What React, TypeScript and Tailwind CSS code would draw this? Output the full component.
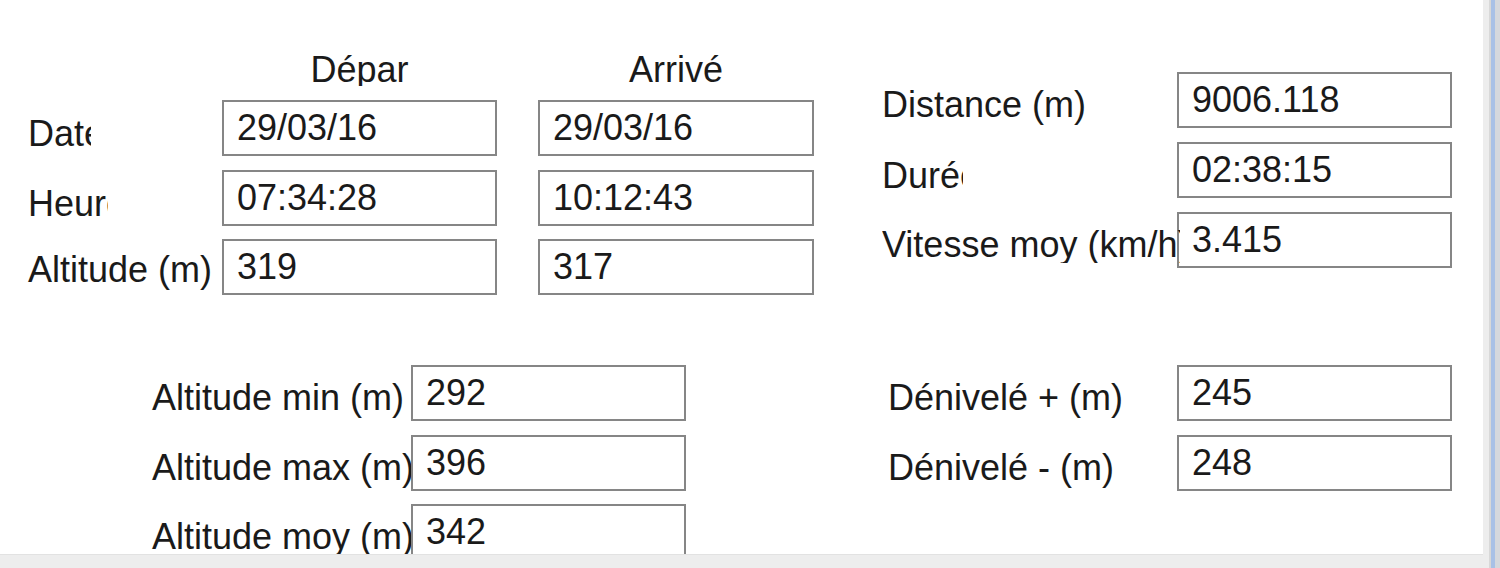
const font = "font-['Liberation_Sans',Arial,sans-serif]";

function Box({ value, w = 'w-[275px]' }: { value: string; w?: string }) {
  return (
    <div className={`${w} h-[56px] shrink-0 border-2 border-[#868686] bg-white pl-[13px] flex items-center text-[36px] leading-none text-[#1a1a1a]`}>
      {value}
    </div>
  );
}

function Label({ text, w, pt = 'pt-[10px]', clip = false }: { text: string; w: string; pt?: string; clip?: boolean }) {
  return (
    <div
      className={`${w} ${pt} shrink-0 whitespace-nowrap text-[36px] leading-[36px] text-[#1a1a1a] ${clip ? 'overflow-hidden' : ''}`}
    >
      {text}
    </div>
  );
}

export default function App() {
  return (
    <div className={`flex h-[568px] w-[1500px] bg-[#ececec] ${font}`}>
      <div className="flex w-[1483px] flex-col">
        <div className="h-[554px] overflow-hidden bg-white">
          {/* top section */}
          <div className="flex items-start">
            <div className="w-[882px] pl-[28px]">
              <div className="flex h-[86px] items-start pt-[52px]">
                <div className="w-[194px]" />
                <div className="h-[34px] w-[275px] overflow-hidden text-center text-[36px] leading-[36px] text-[#1a1a1a]">
                  Dépar
                </div>
                <div className="w-[41px]" />
                <div className="h-[34px] w-[276px] overflow-hidden text-center text-[36px] leading-[36px] text-[#1a1a1a]">
                  Arrivé
                </div>
              </div>
              <div className="mt-[14px] flex flex-col gap-[13.5px]">
                <div className="flex items-center">
                  <div className="w-[194px]">
                    <Label text="Date" w="w-[63px]" pt="pt-[12px]" clip />
                  </div>
                  <Box value="29/03/16" />
                  <div className="w-[41px]" />
                  <Box value="29/03/16" w="w-[276px]" />
                </div>
                <div className="flex items-center">
                  <div className="w-[194px]">
                    <Label text="Heure" w="w-[80px]" pt="pt-[12px]" clip />
                  </div>
                  <Box value="07:34:28" />
                  <div className="w-[41px]" />
                  <Box value="10:12:43" w="w-[276px]" />
                </div>
                <div className="flex items-center">
                  <Label text="Altitude (m)" w="w-[194px]" pt="pt-[6px]" />
                  <Box value="319" />
                  <div className="w-[41px]" />
                  <Box value="317" w="w-[276px]" />
                </div>
              </div>
            </div>

            <div className="flex flex-col gap-[14px] pt-[72px]">
              <div className="flex items-center">
                <Label text="Distance (m)" w="w-[295px]" />
                <Box value="9006.118" />
              </div>
              <div className="flex items-center">
                <div className="w-[295px]">
                  <Label text="Durée" w="w-[81px]" pt="pt-[12px]" clip />
                </div>
                <Box value="02:38:15" />
              </div>
              <div className="flex items-center">
                <div className="relative z-10 w-[295px]">
                  <Label text="Vitesse moy (km/h)" w="w-[298px]" clip />
                </div>
                <Box value="3.415" />
              </div>
            </div>
          </div>

          {/* bottom section */}
          <div className="mt-[70px] flex items-start">
            <div className="flex w-[888px] flex-col gap-[13.5px] pl-[152px]">
              <div className="flex items-center">
                <Label text="Altitude min (m)" w="w-[259px]" />
                <Box value="292" />
              </div>
              <div className="flex items-center">
                <Label text="Altitude max (m)" w="w-[259px]" />
                <Box value="396" />
              </div>
              <div className="flex items-center">
                <Label text="Altitude moy (m)" w="w-[259px]" />
                <Box value="342" />
              </div>
            </div>
            <div className="flex flex-col gap-[13.5px]">
              <div className="flex items-center">
                <Label text="Dénivelé + (m)" w="w-[289px]" />
                <Box value="245" />
              </div>
              <div className="flex items-center">
                <Label text="Dénivelé - (m)" w="w-[289px]" />
                <Box value="248" />
              </div>
            </div>
          </div>
        </div>
        <div className="flex-1 border-t border-[#e2e2e2] bg-[#ededed]" />
      </div>
      <div className="w-[6px] bg-[#ededed]" />
      <div className="w-[2px] bg-[#d8d8d8]" />
      <div className="w-[4px] bg-[#a9c1e6]" />
      <div className="flex-1 bg-[#d5d8dd]" />
    </div>
  );
}
